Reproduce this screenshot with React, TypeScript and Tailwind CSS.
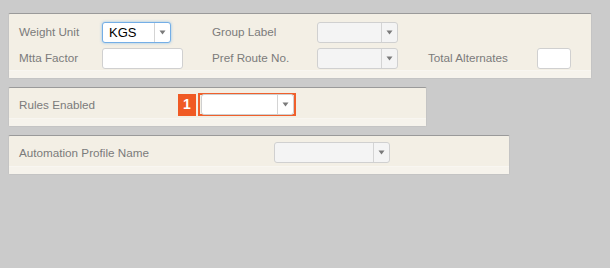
import React from 'react';

function Arrow() {
  return (
    <span className="flex h-full w-[16px] items-center justify-center border-l border-[#d4d4d4]">
      <svg width="7" height="5" viewBox="0 0 7 5">
        <path d="M0.5 0.5 L6.5 0.5 L3.5 4.5 Z" fill="#7a7a7a" />
      </svg>
    </span>
  );
}

function Select({ width, value, focused, white }: { width: string; value?: string; focused?: boolean; white?: boolean }) {
  const base = focused
    ? 'border-[#74aee6] bg-white shadow-[0_0_3px_rgba(102,175,233,0.7)]'
    : white
    ? 'border-[#cfcfcf] bg-white'
    : 'border-[#d0d0d0] bg-[#f4f4f4]';
  return (
    <div className={`flex h-[21px] items-stretch rounded-[3px] border ${base} ${width}`}>
      <span className="flex flex-1 items-center pl-[6px] text-[13px] leading-none text-black">{value}</span>
      <Arrow />
    </div>
  );
}

function Input({ width }: { width: string }) {
  return <div className={`h-[21px] rounded-[3px] border border-[#d0d0d0] bg-white ${width}`}></div>;
}

function Label({ children }: { children: React.ReactNode }) {
  return <span className="pb-[2px] text-[11.7px] leading-none text-[#7b7b7b]">{children}</span>;
}

function Panel({ width, children }: { width: string; children: React.ReactNode }) {
  return (
    <div className={`flex flex-col overflow-hidden rounded-[2px] border border-[#c4c4c4] border-t-[#9a9a9a] bg-[#f3efe5] ${width}`}>
      <div className="flex-1">{children}</div>
      <div className="h-[8px] shrink-0 border-t border-[#f8f6f1] bg-[#f6f3ec]"></div>
    </div>
  );
}

export default function App() {
  return (
    <main
      className="flex h-[268px] w-[610px] flex-col gap-[8px] bg-[#cbcbcb] pl-[8px] pt-[13px]"
      style={{ fontFamily: '"Liberation Sans", Arial, sans-serif' }}
    >
      {/* Weight / route panel */}
      <Panel width="w-[584px] h-[66px]">
        <div className="grid grid-cols-[83px_110px_105px_111px_109px_34px] items-center gap-y-[5px] pl-[10px] pt-[8px]">
          <Label>Weight Unit</Label>
          <Select width="w-[69px]" value="KGS" focused />
          <Label>Group Label</Label>
          <Select width="w-[81px]" />
          <span></span>
          <span></span>

          <Label>Mtta Factor</Label>
          <Input width="w-[81px]" />
          <Label>Pref Route No.</Label>
          <Select width="w-[81px]" />
          <Label>Total Alternates</Label>
          <Input width="w-[34px]" />
        </div>
      </Panel>

      {/* Rules panel */}
      <Panel width="w-[419px] h-[40px]">
        <div className="flex items-center pl-[10px] pt-[5px]">
          <span className="w-[159px] text-[11.7px] leading-none text-[#7b7b7b]">Rules Enabled</span>
          <span className="flex h-[22px] w-[18px] items-center justify-center bg-[#f05a24] text-[14px] font-bold text-white">1</span>
          <div className="ml-[2px] flex h-[23px] w-[98px] items-center justify-center border-2 border-[#f0602c]">
            <Select width="w-[93px]" white />
          </div>
        </div>
      </Panel>

      {/* Automation panel */}
      <Panel width="w-[502px] h-[40px]">
        <div className="flex items-center pl-[10px] pt-[6px]">
          <span className="w-[255px] text-[11.7px] leading-none text-[#7b7b7b]">Automation Profile Name</span>
          <Select width="w-[116px]" />
        </div>
      </Panel>
    </main>
  );
}
